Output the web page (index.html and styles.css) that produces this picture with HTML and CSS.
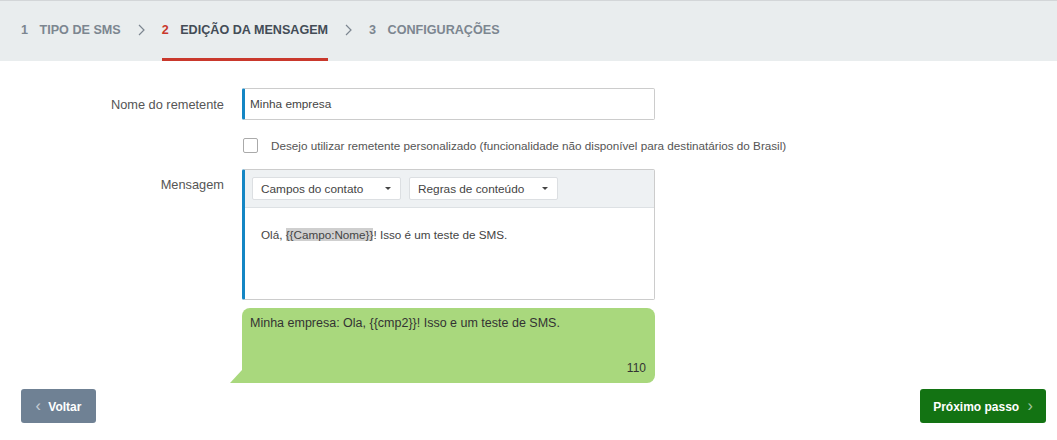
FILE: index.html
```html
<!DOCTYPE html>
<html lang="pt-BR">
<head>
  <meta charset="UTF-8" />
  <meta name="viewport" content="width=device-width, initial-scale=1.0"/>
  <title>Edição da mensagem - SMS</title>
  <link rel="stylesheet" href="styles.css">
</head>
<body>

  <div class="passos">
    <div class="passo"><span class="num">1</span> TIPO DE SMS</div>
    <svg class="seta" width="7" height="12" viewBox="0 0 7 12"><path d="M1 1l5 5-5 5" fill="none" stroke="currentColor" stroke-width="1.2"/></svg>
    <div class="passo ativo"><span class="num">2</span> EDIÇÃO DA MENSAGEM</div>
    <svg class="seta" width="7" height="12" viewBox="0 0 7 12"><path d="M1 1l5 5-5 5" fill="none" stroke="currentColor" stroke-width="1.2"/></svg>
    <div class="passo"><span class="num">3</span> CONFIGURAÇÕES</div>
  </div>

  <div class="formulario">
    <div class="linha centro">
      <label class="rotulo">Nome do remetente</label>
      <input type="text" class="campo-texto" value="Minha empresa" />
    </div>

    <div class="linha checkbox-linha">
      <div class="rotulo"></div>
      <label class="check">
        <span class="caixa"></span>
        Desejo utilizar remetente personalizado (funcionalidade não disponível para destinatários do Brasil)
      </label>
    </div>

    <div class="linha">
      <label class="rotulo rotulo-topo">Mensagem</label>
      <div class="mensagem-coluna">
        <div class="editor">
          <div class="editor-barra">
            <div class="seletor">Campos do contato <span class="caret"></span></div>
            <div class="seletor">Regras de conteúdo <span class="caret"></span></div>
          </div>
          <div class="editor-texto">
            Olá, <span class="variavel">{{Campo:Nome}}</span>! Isso é um teste de SMS.
          </div>
        </div>

        <div class="balao">
          <div>Minha empresa: Ola, {{cmp2}}! Isso e um teste de SMS.</div>
          <div class="contador">110</div>
        </div>
      </div>
    </div>
  </div>

  <div class="rodape">
    <button class="btn btn-voltar"><span class="ico">&lsaquo;</span> Voltar</button>
    <button class="btn btn-proximo">Próximo passo <span class="ico">&rsaquo;</span></button>
  </div>

</body>
</html>
```

FILE: styles.css
```css
body {
  margin: 0;
  font-family: "Liberation Sans", Arial, sans-serif;
  font-size: 12px;
  color: #444;
  background: #fff;
}

/* passos */
.passos {
  display: flex;
  align-items: center;
  height: 60px;
  padding-left: 21px;
  background: #e9edee;
  border-top: 1px solid #d3d6d8;
  gap: 17px;
}

.passo {
  height: 57px;
  display: flex;
  align-items: center;
  border-bottom: 3px solid transparent;
  font-size: 12.6px;
  font-weight: bold;
  color: #7c8690;
  white-space: pre;
}

.passo .num {
  margin-right: 8px;
}

.passo.ativo {
  color: #434c56;
  border-bottom-color: #c9382c;
}

.passo.ativo .num {
  color: #c9382c;
}

.seta {
  color: #7c8690;
  margin-bottom: 3px;
}

/* formulario */
.formulario {
  padding-top: 27px;
}

.linha {
  display: flex;
  align-items: flex-start;
}

.linha.centro {
  align-items: center;
}

.rotulo {
  width: 224px;
  margin-right: 18px;
  text-align: right;
  font-size: 12.8px;
  color: #555;
  flex-shrink: 0;
}

.rotulo-topo {
  padding-top: 8px;
}

.campo-texto {
  width: 413px;
  height: 32px;
  box-sizing: border-box;
  border: 1px solid #ccc;
  border-left: 3px solid #1486c4;
  border-radius: 2px;
  padding: 0 5px;
  font-family: inherit;
  font-size: 11.8px;
  color: #444;
  outline: none;
}

.checkbox-linha {
  margin-top: 18px;
  margin-bottom: 16px;
}

.check {
  display: flex;
  align-items: center;
  gap: 13px;
  color: #555;
  padding-left: 1px;
  font-size: 11.7px;
}

.caixa {
  width: 13px;
  height: 13px;
  border: 1px solid #aaa;
  border-radius: 2px;
  background: #fff;
}

/* editor */
.mensagem-coluna {
  width: 413px;
}

.editor {
  border: 1px solid #ccc;
  border-left: 3px solid #1486c4;
  border-radius: 2px;
  height: 131px;
  box-sizing: border-box;
}

.editor-barra {
  background: #eef1f3;
  border-bottom: 1px solid #dde1e4;
  height: 38px;
  box-sizing: border-box;
  display: flex;
  align-items: center;
  padding-left: 7px;
  gap: 8px;
}

.seletor {
  width: 149px;
  height: 23px;
  box-sizing: border-box;
  background: #fff;
  border: 1px solid #dcdfe2;
  border-radius: 2px;
  padding: 0 9px 0 8px;
  display: flex;
  align-items: center;
  justify-content: space-between;
  color: #444;
  font-size: 11.8px;
}

.caret {
  width: 0;
  height: 0;
  border-left: 3px solid transparent;
  border-right: 3px solid transparent;
  border-top: 3px solid #444;
}

.editor-texto {
  padding: 20px 16px 20px 16px;
  color: #444;
  font-size: 11.7px;
}

.variavel {
  background: #cfcfcf;
}

/* balao */
.balao {
  position: relative;
  margin-top: 8px;
  height: 75px;
  box-sizing: border-box;
  background: #a9d87d;
  border-radius: 8px 8px 8px 0;
  padding: 8px 9px 8px 8px;
  display: flex;
  flex-direction: column;
  justify-content: space-between;
  color: #333;
  font-size: 12.5px;
}

.balao::before {
  content: "";
  position: absolute;
  left: -12px;
  bottom: 0;
  width: 0;
  height: 0;
  border-left: 12px solid transparent;
  border-bottom: 13px solid #a9d87d;
}

.contador {
  text-align: right;
  font-size: 12px;
}

/* rodape */
.rodape {
  display: flex;
  justify-content: space-between;
  padding: 6px 11px 0 21px;
}

.btn {
  height: 34px;
  border: none;
  border-radius: 3px;
  color: #fff;
  font-family: inherit;
  font-size: 12px;
  font-weight: bold;
  cursor: pointer;
}

.btn .ico {
  font-size: 16px;
  font-weight: normal;
  opacity: 0.6;
}

.btn-voltar {
  width: 75px;
  background: #6f8194;
}

.btn-voltar .ico {
  margin-right: 4px;
}

.btn-proximo {
  width: 126px;
  background: #137313;
}

.btn-proximo .ico {
  margin-left: 5px;
}
```
